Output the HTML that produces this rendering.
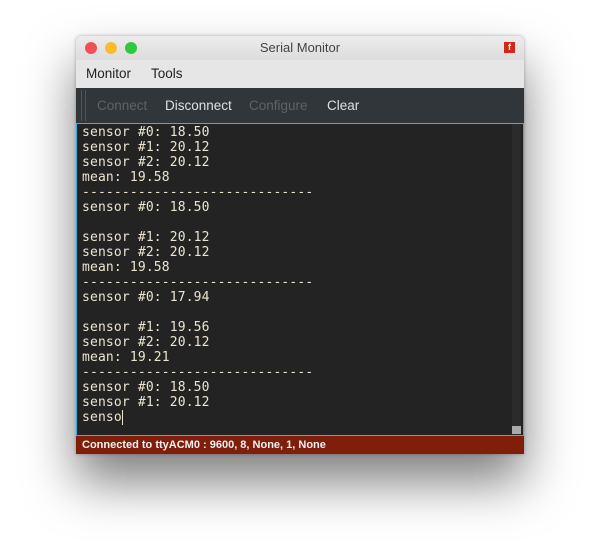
<!DOCTYPE html>
<html><head><style>
body{margin:0;width:600px;height:541px;background:#fff;position:relative;overflow:hidden;font-family:"Liberation Sans",sans-serif}
.win{position:absolute;left:76px;top:36px;width:448px;height:418px;background:#e6e6e6;box-shadow:0 28px 50px rgba(0,0,0,.5),0 0 3px rgba(0,0,0,.3);border-radius:5px 5px 0 0;overflow:hidden}
.title{height:24px;background:linear-gradient(#ececec,#dcdcdc);text-align:center;font-size:13px;line-height:24px;color:#444;position:relative}
.dot{position:absolute;top:6px;width:12px;height:12px;border-radius:50%}
.menu{height:28px;background:#e6e6e6;font-size:13.5px;line-height:28px;color:#222}
.menu span{margin-left:10px;margin-right:10px}
.tb{height:35px;background:#31363b;position:relative;font-size:13.5px;line-height:35px}
.tb span{position:absolute;top:0}
.ta{position:absolute;left:0;top:87px;width:446px;height:311px;background:#232323;border:1px solid #3daee9}
.ta pre{margin:0;padding:1px 0 0 5px;font-family:"DejaVu Sans Mono",monospace;font-size:13px;letter-spacing:0.15px;line-height:15px;color:#ece4cf}
.sb{position:absolute;right:2px;top:0;width:9px;height:311px;background:#2b2b2b}
.st{position:absolute;left:0;top:400px;width:448px;height:18px;background:#7f1e0b;color:#f2f2f2;font-size:11px;font-weight:bold;line-height:18px;padding-left:6px;box-sizing:border-box}
.cur{display:inline-block;width:1px;height:15px;background:#ece4cf;vertical-align:top}
</style></head><body>
<div class="win">
<div class="title"><div class="dot" style="left:9px;background:#f25056"></div><div class="dot" style="left:29px;background:#f9bc2f"></div><div class="dot" style="left:49px;background:#2fc840"></div>Serial Monitor
<div style="position:absolute;right:9px;top:6px;width:11px;height:11px;background:#d4261b;color:#fff;font-size:9px;line-height:11px;font-weight:bold">f</div></div>
<div class="menu"><span>Monitor</span><span>Tools</span></div>
<div class="tb"><div style="position:absolute;left:5px;top:2px;width:3px;height:31px;border-left:1px solid #555;border-right:1px solid #555"></div>
<span style="left:21px;color:#5e6367">Connect</span><span style="left:89px;color:#dde0e3">Disconnect</span><span style="left:173px;color:#5e6367">Configure</span><span style="left:251px;color:#dde0e3">Clear</span></div>
<div class="ta"><div class="sb"><div style="position:absolute;bottom:1px;left:0;width:9px;height:8px;background:#aaa"></div></div><pre>sensor #0: 18.50
sensor #1: 20.12
sensor #2: 20.12
mean: 19.58
-----------------------------
sensor #0: 18.50

sensor #1: 20.12
sensor #2: 20.12
mean: 19.58
-----------------------------
sensor #0: 17.94

sensor #1: 19.56
sensor #2: 20.12
mean: 19.21
-----------------------------
sensor #0: 18.50
sensor #1: 20.12
senso<span class="cur"></span></pre></div>
<div class="st">Connected to ttyACM0 : 9600, 8, None, 1, None</div>
</div>
</body></html>
